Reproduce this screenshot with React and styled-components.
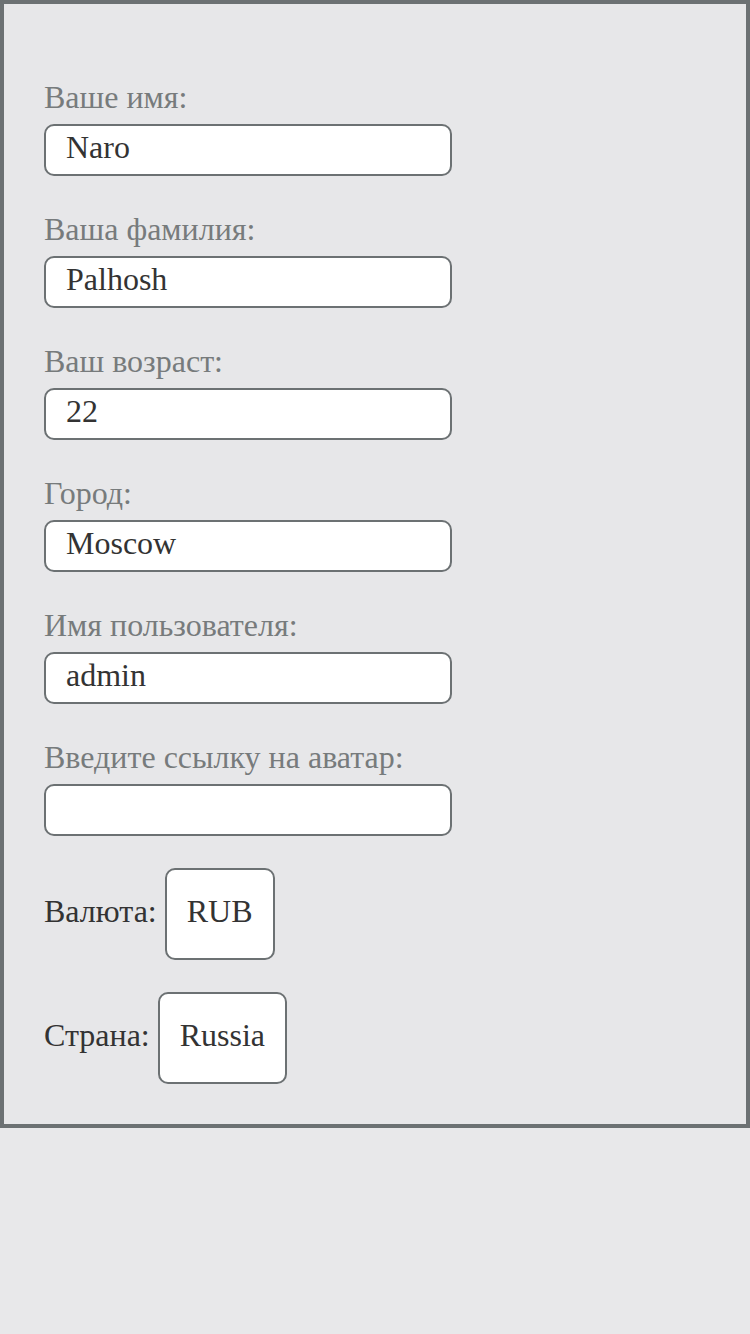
import React from "react"
import styled, { createGlobalStyle } from "styled-components"

const GlobalStyle = createGlobalStyle`
  body {
    margin: 0;
    background-color: #e8e8ea;
    font-family: "Liberation Serif", "Times New Roman", serif;
  }
`

const fields = [
  { label: "Ваше имя:", value: "Naro" },
  { label: "Ваша фамилия:", value: "Palhosh" },
  { label: "Ваш возраст:", value: "22" },
  { label: "Город:", value: "Moscow" },
  { label: "Имя пользователя:", value: "admin" },
  { label: "Введите ссылку на аватар:", value: "" },
]

const App = () => {
  return (
    <>
      <GlobalStyle />
      <Wrapper>
        {fields.map((f) => (
          <Field key={f.label}>
            <Label>{f.label}</Label>
            <Input type="text" defaultValue={f.value} />
          </Field>
        ))}
        <Choice>
          <ChoiceLabel>Валюта:</ChoiceLabel>
          <Picker>RUB</Picker>
        </Choice>
        <Choice>
          <ChoiceLabel>Страна:</ChoiceLabel>
          <Picker>Russia</Picker>
        </Choice>
      </Wrapper>
    </>
  )
}

const Wrapper = styled.main`
  border: 4px solid #6c7173;
  background-color: #e7e7e9;
  padding: 40px;
  display: flex;
  flex-direction: column;
  align-items: flex-start;
`
const Field = styled.div`
  display: flex;
  flex-direction: column;
  align-items: flex-start;
  margin-top: 35px;
`
const Label = styled.label`
  font-size: 32px;
  color: #777b7c;
  margin-bottom: 8px;
`
const Input = styled.input`
  box-sizing: border-box;
  width: 408px;
  height: 52px;
  border: 2px solid #6c7173;
  border-radius: 10px;
  background: #fff;
  padding: 0 20px 6px;
  font-family: "Liberation Serif", "Times New Roman", serif;
  font-size: 32px;
  color: #333;
  outline: none;
`
const Choice = styled.div`
  display: flex;
  align-items: baseline;
  gap: 8px;
  margin-top: 32px;
`
const ChoiceLabel = styled.span`
  font-size: 32px;
  color: #333;
`
const Picker = styled.button`
  box-sizing: border-box;
  height: 92px;
  padding: 0 20px 6px;
  border: 2px solid #6c7173;
  border-radius: 10px;
  background: #fff;
  font-family: "Liberation Serif", "Times New Roman", serif;
  font-size: 32px;
  color: #333;
`

export default App
